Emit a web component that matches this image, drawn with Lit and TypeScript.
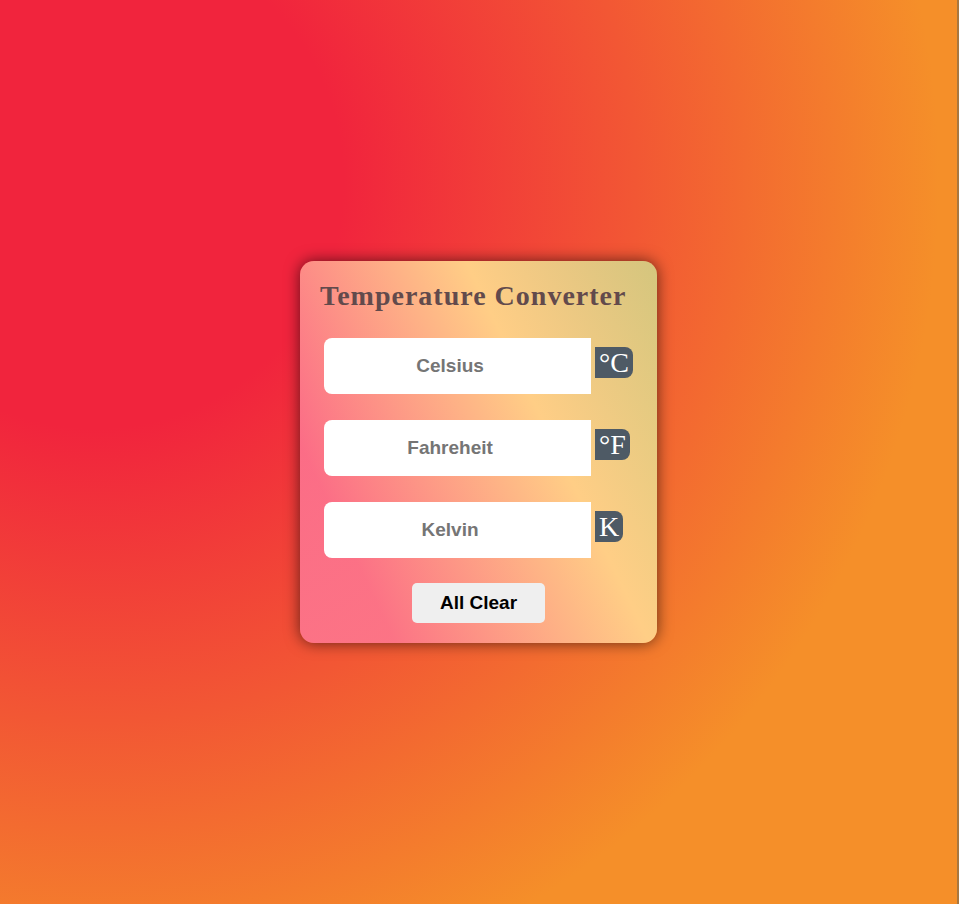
import { LitElement, css, html } from "lit";
import { customElement, state } from "lit/decorators.js";

type Unit = "celsius" | "fahrenheit" | "kelvin";

interface Field {
  id: Unit;
  placeholder: string;
  symbol: string;
}

const FIELDS: Field[] = [
  { id: "celsius", placeholder: "Celsius", symbol: "°C" },
  { id: "fahrenheit", placeholder: "Fahreheit", symbol: "°F" },
  { id: "kelvin", placeholder: "Kelvin", symbol: "K" },
];

const EMPTY: Record<Unit, string> = { celsius: "", fahrenheit: "", kelvin: "" };

const format = (n: number) => String(Math.round(n * 100) / 100);

@customElement("app-root")
export class AppRoot extends LitElement {
  static styles = css`
    :host {
      box-sizing: border-box;
      display: flex;
      align-items: center;
      justify-content: center;
      min-height: 100vh;
      border-right: 2px solid #a8773f;
      font-family: "Liberation Serif", "Times New Roman", serif;
      background: radial-gradient(
        circle farthest-corner at 10% 20%,
        rgb(241, 36, 61) 22%,
        rgb(242, 87, 52) 48%,
        rgb(245, 143, 41) 75%
      );
    }
    .card {
      padding: 20px;
      border-radius: 14px;
      background: linear-gradient(
        64.3deg,
        rgba(254, 122, 152, 0.81) 17.7%,
        rgba(255, 206, 134, 1) 64.7%,
        rgba(172, 253, 163, 0.64) 112.1%
      );
      box-shadow: 0 0 15px rgba(0, 0, 0, 0.6);
    }
    .title {
      margin: 0 0 27px;
      font-size: 28px;
      line-height: 30px;
      font-weight: bold;
      letter-spacing: 1px;
      white-space: nowrap;
      color: #624a4c;
    }
    .fields {
      display: grid;
      gap: 26px;
      padding: 0 4px;
    }
    .row {
      display: flex;
      align-items: baseline;
      gap: 4px;
    }
    .input {
      box-sizing: border-box;
      width: 267px;
      height: 56px;
      padding: 0;
      border: 0;
      border-radius: 8px 0 0 8px;
      outline: none;
      background: #fff;
      text-align: center;
      font: bold 19px "Liberation Sans", Arial, sans-serif;
    }
    .input::placeholder {
      color: #757575;
    }
    .unit {
      padding: 0 4px;
      border-radius: 0 8px 8px 0;
      background: #4e5a65;
      color: #fff;
      font-size: 28px;
      line-height: 31px;
    }
    .clear {
      display: block;
      height: 40px;
      margin: 25px auto 0;
      padding: 0 28px;
      border: 0;
      border-radius: 5px;
      background: #efefef;
      color: #000;
      font: bold 19px "Liberation Sans", Arial, sans-serif;
      cursor: pointer;
    }
  `;

  @state() private values: Record<Unit, string> = { ...EMPTY };

  private convert(unit: Unit, raw: string) {
    const n = parseFloat(raw);
    if (Number.isNaN(n)) {
      this.values = { ...EMPTY };
      return;
    }
    const c =
      unit === "celsius" ? n : unit === "fahrenheit" ? ((n - 32) * 5) / 9 : n - 273.15;
    this.values = {
      celsius: format(c),
      fahrenheit: format((c * 9) / 5 + 32),
      kelvin: format(c + 273.15),
      [unit]: raw,
    };
  }

  private clear() {
    this.values = { ...EMPTY };
  }

  render() {
    return html`
      <main class="card">
        <h1 class="title">Temperature Converter</h1>
        <div class="fields">
          ${FIELDS.map(
            (f) => html`
              <div class="row">
                <input
                  class="input"
                  type="number"
                  id=${f.id}
                  placeholder=${f.placeholder}
                  .value=${this.values[f.id]}
                  @input=${(e: Event) =>
                    this.convert(f.id, (e.target as HTMLInputElement).value)}
                />
                <label class="unit" for=${f.id}>${f.symbol}</label>
              </div>
            `,
          )}
        </div>
        <button class="clear" type="button" @click=${this.clear}>All Clear</button>
      </main>
    `;
  }
}
